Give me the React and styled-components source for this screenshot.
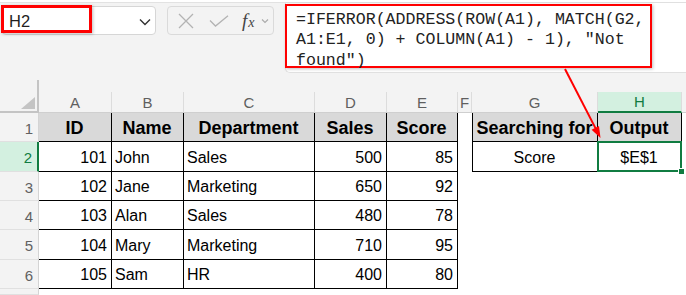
import React from "react";
import styled, { createGlobalStyle } from "styled-components";

const GlobalStyle = createGlobalStyle`
  body {
    margin: 0;
    background: #f3f3f3;
    font-family: "Liberation Sans", Arial, sans-serif;
  }
`;

const Page = styled.div`
  position: relative;
  width: 686px;
  height: 295px;
  overflow: hidden;
  background: #f3f3f3;
`;

const TopBar = styled.div`
  height: 80px;
  display: flex;
  align-items: flex-start;
  padding-left: 2px;
  box-sizing: border-box;
  border-top: 2px solid #fff;
  box-shadow: inset 0 1px 0 #e2e2e2;
`;

const NameBox = styled.div`
  position: relative;
  margin-top: 4px;
  width: 154px;
  height: 29px;
  box-sizing: border-box;
  background: #fff;
  border: 1px solid #d6d6d6;
  border-radius: 4px;
  display: flex;
  align-items: center;
  justify-content: space-between;
  padding: 2px 4px 0 6px;
  font-size: 16.5px;
  color: #1f1f1f;
`;

const Callout = styled.div`
  position: absolute;
  left: -2px;
  top: -2px;
  width: 91px;
  height: 28px;
  box-sizing: border-box;
  border: 3px solid #f00;
  box-shadow: 1px 1px 3px rgba(0, 0, 0, 0.25);
`;

const ToolBox = styled.div`
  margin: 4px 0 0 11px;
  width: 107px;
  height: 29px;
  box-sizing: border-box;
  border: 1px solid #dadada;
  border-radius: 4px;
  display: flex;
  align-items: center;
  padding-left: 10px;
  gap: 15px;
`;

const Fx = styled.span`
  font-family: "Liberation Serif", "Times New Roman", serif;
  font-style: italic;
  font-size: 19px;
  color: #444;
  display: flex;
  align-items: baseline;
  margin-left: -2px;
  small {
    font-size: 14px;
    margin-left: 1px;
  }
`;

const FormulaBox = styled.div`
  margin: 0 0 0 11px;
  flex: 1;
  height: 71px;
  background: #fff;
  border: 1px solid #e0e0e0;
  border-right: none;
  border-radius: 0 0 0 5px;
  box-sizing: border-box;
  padding-top: 1px;
`;

const FormulaText = styled.div`
  width: 367px;
  height: 64px;
  box-sizing: border-box;
  margin-left: -1px;
  border: 2.5px solid #f00;
  box-shadow: 1px 1px 3px rgba(0, 0, 0, 0.25);
  padding: 4px 0 0 9px;
  font-family: "Liberation Mono", "DejaVu Sans Mono", monospace;
  font-size: 16.6px;
  line-height: 20.4px;
  color: #222;
  white-space: pre;
`;

const Sheet = styled.div`
  display: grid;
  grid-template-columns: 39px 73px 72px 131px 72px 71px 14px 126px 84px 1fr;
  grid-template-rows: 33px 29px 30px 29px 29px 30px 29px 1fr;
  height: 215px;
`;

const Corner = styled.div`
  position: relative;
  box-sizing: border-box;
  border-right: 2px solid #c4c4c4;
  border-bottom: 2px solid #c4c4c4;
  svg {
    position: absolute;
    right: 2px;
    bottom: 2px;
  }
`;

const ColHead = styled.div`
  display: flex;
  align-items: flex-end;
  box-sizing: border-box;
  border-bottom: 1px solid #cfcfcf;
`;

const ColLabel = styled.div`
  flex: 1;
  height: ${(p) => (p.$active ? "19px" : "20px")};
  display: flex;
  align-items: center;
  justify-content: center;
  font-size: 15px;
  color: ${(p) => (p.$active ? "#107c41" : "#5f5f5f")};
  background: ${(p) => (p.$active ? "#d3f0e0" : "transparent")};
  border-right: ${(p) => (p.$last ? "none" : "1px solid #dcdcdc")};
  border-bottom: ${(p) => (p.$active ? "2px solid #107c41" : "none")};
  margin-bottom: ${(p) => (p.$active ? "-1px" : "0")};
`;

const RowHead = styled.div`
  box-sizing: border-box;
  display: flex;
  align-items: center;
  justify-content: flex-end;
  padding: 2px 5px 0 0;
  font-size: 15px;
  color: ${(p) => (p.$active ? "#107c41" : "#616161")};
  background: ${(p) => (p.$active ? "#d3f0e0" : "#f3f3f3")};
  border-right: ${(p) => (p.$active ? "2px solid #107c41" : "1px solid #d4d4d4")};
  border-bottom: 1px solid #e0e0e0;
`;

const Cell = styled.div`
  position: relative;
  box-sizing: border-box;
  display: flex;
  align-items: center;
  justify-content: ${(p) =>
    p.$align === "right" ? "flex-end" : p.$align === "center" ? "center" : "flex-start"};
  padding: 2px 4px 0 3px;
  white-space: nowrap;
  background: ${(p) => (p.$head ? "#d9d9d9" : "#fff")};
  font-size: ${(p) => (p.$head ? "18px" : "16px")};
  font-weight: ${(p) => (p.$head ? 700 : 400)};
  color: #000;
  border-right: ${(p) => (p.$b ? "1px solid #000" : "none")};
  border-bottom: ${(p) => (p.$b ? "1px solid #000" : "none")};
  border-left: ${(p) => (p.$left ? "1px solid #000" : "none")};

  ${(p) =>
    p.$selected &&
    `
    &::after {
      content: "";
      position: absolute;
      left: -1px;
      top: -1px;
      right: -1px;
      bottom: -1px;
      border: 2px solid #107c41;
    }
    &::before {
      content: "";
      position: absolute;
      right: -4px;
      bottom: -4px;
      width: 5px;
      height: 5px;
      background: #107c41;
      border: 1px solid #fff;
      z-index: 2;
    }
  `}
`;

const Filler = styled.div`
  background: #fff;
`;

const Arrow = styled.svg`
  position: absolute;
  left: 0;
  top: 0;
  pointer-events: none;
`;

const cols = ["A", "B", "C", "D", "E", "F", "G", "H"];

const headers = ["ID", "Name", "Department", "Sales", "Score"];

const data = [
  [101, "John", "Sales", 500, 85],
  [102, "Jane", "Marketing", 650, 92],
  [103, "Alan", "Sales", 480, 78],
  [104, "Mary", "Marketing", 710, 95],
  [105, "Sam", "HR", 400, 80],
];

const formula = `=IFERROR(ADDRESS(ROW(A1), MATCH(G2,
A1:E1, 0) + COLUMN(A1) - 1), "Not
found")`;

export default function App() {
  return (
    <>
      <GlobalStyle />
      <Page>
        <TopBar>
          <NameBox>
            <span>H2</span>
            <svg width="12" height="8" viewBox="0 0 12 8">
              <path d="M1 1.5 L6 6.5 L11 1.5" fill="none" stroke="#333" strokeWidth="1.4" />
            </svg>
            <Callout />
          </NameBox>
          <ToolBox>
            <svg width="16" height="16" viewBox="0 0 16 16">
              <path d="M1 1 L15 15 M15 1 L1 15" stroke="#b3b3b3" strokeWidth="1.3" />
            </svg>
            <svg width="20" height="12" viewBox="0 0 20 12">
              <path d="M1 5.5 L6.5 11 L19 0.8" fill="none" stroke="#b3b3b3" strokeWidth="1.3" />
            </svg>
            <Fx>
              f<small>x</small>
              <svg width="8" height="6" viewBox="0 0 8 6" style={{ marginLeft: 6, alignSelf: "center" }}>
                <path d="M1 1.5 L4 4.5 L7 1.5" fill="none" stroke="#aaa" strokeWidth="1.1" />
              </svg>
            </Fx>
          </ToolBox>
          <FormulaBox>
            <FormulaText>{formula}</FormulaText>
          </FormulaBox>
        </TopBar>

        <Sheet>
          <Corner>
            <svg width="14" height="12" viewBox="0 0 14 12">
              <polygon points="14,0 14,12 0,12" fill="#c4c4c4" />
            </svg>
          </Corner>
          {cols.map((c) => (
            <ColHead key={c}>
              <ColLabel $active={c === "H"}>{c}</ColLabel>
            </ColHead>
          ))}
          <ColHead>
            <ColLabel $last />
          </ColHead>

          <RowHead>1</RowHead>
          {headers.map((h) => (
            <Cell key={h} $head $b $align="center">
              {h}
            </Cell>
          ))}
          <Filler />
          <Cell $head $b $left $align="center">
            Searching for
          </Cell>
          <Cell $head $b $align="center">
            Output
          </Cell>
          <Filler />

          {data.map((row, i) => (
            <React.Fragment key={row[0]}>
              <RowHead $active={i === 0}>{i + 2}</RowHead>
              <Cell $b $align="right">{row[0]}</Cell>
              <Cell $b>{row[1]}</Cell>
              <Cell $b>{row[2]}</Cell>
              <Cell $b $align="right">{row[3]}</Cell>
              <Cell $b $align="right">{row[4]}</Cell>
              <Filler />
              {i === 0 ? (
                <>
                  <Cell $b $left $align="center">Score</Cell>
                  <Cell $b $align="center" $selected>$E$1</Cell>
                </>
              ) : (
                <>
                  <Filler />
                  <Filler />
                </>
              )}
              <Filler />
            </React.Fragment>
          ))}

          <RowHead />
          {cols.map((c) => (
            <Filler key={c} />
          ))}
          <Filler />
        </Sheet>

        <Arrow width="686" height="295">
          <line x1="565" y1="69" x2="595.6" y2="128.4" stroke="#f00" strokeWidth="2" />
          <polygon points="600.5,138 591.6,129.8 599,126" fill="#f00" />
        </Arrow>
      </Page>
    </>
  );
}
